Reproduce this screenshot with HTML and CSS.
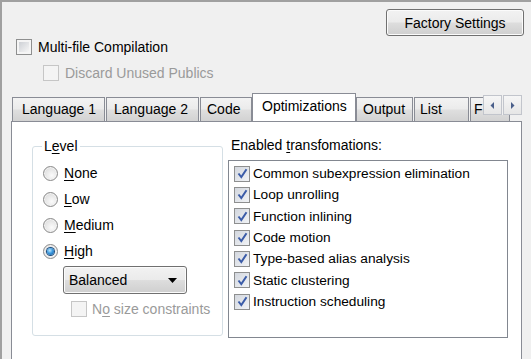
FILE: index.html
```html
<!DOCTYPE html>
<html>
<head>
<meta charset="utf-8">
<link rel="stylesheet" href="styles.css">
</head>
<body>
<div class="frame">
  <div class="top">
    <button class="btn factory">Factory Settings</button>
  </div>
  <div class="row multi">
    <span class="cb"></span><span class="lbl">Multi-file Compilation</span>
  </div>
  <div class="row discard disabled">
    <span class="cb off"></span><span class="lbl">Discard Unused Publics</span>
  </div>

  <div class="tabstrip">
    <div class="tab t-l1">Language 1</div>
    <div class="tab t-l2">Language 2</div>
    <div class="tab t-code">Code</div>
    <div class="tab sel t-opt">Optimizations</div>
    <div class="tab t-out">Output</div>
    <div class="tab t-list">List</div>
    <div class="tab t-f">F</div>
    <div class="scroller">
      <span class="sbtn"><svg width="5" height="7" viewBox="0 0 5 7"><path d="M4 0 L4 7 L0.5 3.5 Z" fill="#4a5f8a"/></svg></span>
      <span class="sbtn"><svg width="5" height="7" viewBox="0 0 5 7"><path d="M1 0 L1 7 L4.5 3.5 Z" fill="#4a5f8a"/></svg></span>
    </div>
  </div>

  <div class="panel">
    <fieldset class="group">
      <legend>L<u>e</u>vel</legend>
      <div class="radio-row"><span class="rb"></span><span class="lbl"><u>N</u>one</span></div>
      <div class="radio-row"><span class="rb"></span><span class="lbl"><u>L</u>ow</span></div>
      <div class="radio-row"><span class="rb"></span><span class="lbl"><u>M</u>edium</span></div>
      <div class="radio-row"><span class="rb on"><span class="dot"></span></span><span class="lbl"><u>H</u>igh</span></div>
      <div class="combo"><span class="ctext">Balanced</span><svg width="9" height="5" viewBox="0 0 9 5"><path d="M0 0 L9 0 L4.5 5 Z" fill="#000"/></svg></div>
      <div class="row nosize disabled"><span class="cb off"></span><span class="lbl">N<u>o</u> size constraints</span></div>
    </fieldset>

    <div class="right">
      <div class="caption">Enabled <u>t</u>ransfomations:</div>
      <div class="listbox">
        <div class="item"><span class="cb chk"><svg width="11" height="11" viewBox="0 0 11 11"><path d="M1.5 5.5 L4.3 9 L9.5 1.2" fill="none" stroke="#3b5ca8" stroke-width="2"/></svg></span><span>Common subexpression elimination</span></div>
        <div class="item"><span class="cb chk"><svg width="11" height="11" viewBox="0 0 11 11"><path d="M1.5 5.5 L4.3 9 L9.5 1.2" fill="none" stroke="#3b5ca8" stroke-width="2"/></svg></span><span>Loop unrolling</span></div>
        <div class="item"><span class="cb chk"><svg width="11" height="11" viewBox="0 0 11 11"><path d="M1.5 5.5 L4.3 9 L9.5 1.2" fill="none" stroke="#3b5ca8" stroke-width="2"/></svg></span><span>Function inlining</span></div>
        <div class="item"><span class="cb chk"><svg width="11" height="11" viewBox="0 0 11 11"><path d="M1.5 5.5 L4.3 9 L9.5 1.2" fill="none" stroke="#3b5ca8" stroke-width="2"/></svg></span><span>Code motion</span></div>
        <div class="item"><span class="cb chk"><svg width="11" height="11" viewBox="0 0 11 11"><path d="M1.5 5.5 L4.3 9 L9.5 1.2" fill="none" stroke="#3b5ca8" stroke-width="2"/></svg></span><span>Type-based alias analysis</span></div>
        <div class="item"><span class="cb chk"><svg width="11" height="11" viewBox="0 0 11 11"><path d="M1.5 5.5 L4.3 9 L9.5 1.2" fill="none" stroke="#3b5ca8" stroke-width="2"/></svg></span><span>Static clustering</span></div>
        <div class="item"><span class="cb chk"><svg width="11" height="11" viewBox="0 0 11 11"><path d="M1.5 5.5 L4.3 9 L9.5 1.2" fill="none" stroke="#3b5ca8" stroke-width="2"/></svg></span><span>Instruction scheduling</span></div>
      </div>
    </div>
  </div>
</div>
</body>
</html>
```
FILE: styles.css
```css
html, body {
  margin: 0;
  padding: 0;
}
body {
  background: #f0f0f0;
  font-family: "Liberation Sans", Arial, sans-serif;
  font-size: 14px;
  color: #000;
  width: 531px;
  height: 359px;
  overflow: hidden;
}
u {
  text-decoration: underline;
  text-underline-offset: 2px;
}
.frame {
  height: 359px;
  box-sizing: border-box;
  border-left: 2px solid #a0a0a0;
  border-top: 2px solid #a0a0a0;
  overflow: hidden;
}
.top {
  display: flex;
  justify-content: flex-end;
  padding: 7px 7px 0 0;
}
.btn {
  font: inherit;
  color: #000;
  border: 1px solid #707070;
  border-radius: 3px;
  background: linear-gradient(#f2f2f2 0%, #ebebeb 48%, #dddddd 52%, #cfcfcf 100%);
  box-shadow: inset 0 0 0 1px #fbfbfb;
  padding: 0;
}
.factory {
  width: 138px;
  height: 27px;
}
.row {
  display: flex;
  align-items: center;
  height: 17px;
}
.row .lbl {
  margin-left: 6px;
}
.multi {
  margin-top: 2px;
  padding-left: 14px;
}
.discard {
  margin-top: 9px;
  padding-left: 41px;
}
.disabled {
  color: #9a9a9a;
}
.cb {
  box-sizing: border-box;
  width: 16px;
  height: 16px;
  flex: none;
  border: 1px solid #8e8f8f;
  padding: 2px;
  background: linear-gradient(135deg, #cdd0d5, #f6f6f6) content-box, #f5f5f5;
  display: inline-flex;
  align-items: center;
  justify-content: center;
}
.cb.off {
  border-color: #c6c6c6;
  background: #f4f4f4;
}
.cb.chk {
  background: linear-gradient(135deg, #d3d7de, #f1f3f6) content-box, #f4f4f4;
  padding: 0;
}
.tabstrip {
  position: relative;
  z-index: 1;
  display: flex;
  align-items: flex-end;
  height: 28px;
  margin-top: 12px;
  margin-left: 10px;
  width: 510px;
  overflow: hidden;
}
.tab {
  box-sizing: border-box;
  height: 24px;
  flex: none;
  border: 1px solid #898c95;
  border-bottom: none;
  background: linear-gradient(#f3f3f3 0%, #ebebeb 48%, #dfdfdf 52%, #d2d2d2 100%);
  padding: 3px 0 0 7px;
  line-height: 17px;
  white-space: nowrap;
}
.tab + .tab {
  margin-left: 1px;
}
.t-l1 { width: 93px; padding-left: 9px; }
.t-l2 { width: 93px; }
.t-code { width: 52px; padding-left: 6px; }
.t-opt { width: 104px; }
.t-out { width: 57px; padding-left: 6px; }
.t-list { width: 55px; padding-left: 5px; }
.t-f { width: 40px; padding-left: 3px; }
.tab.sel {
  height: 29px;
  margin-bottom: -1px;
  background: #fff;
  padding-top: 4px;
  padding-left: 9px;
  margin-left: 0;
}
.tab.sel + .tab {
  margin-left: 0;
}
.scroller {
  position: absolute;
  right: 0;
  top: 2px;
  display: flex;
  gap: 1px;
  background: #f0f0f0;
}
.sbtn {
  box-sizing: border-box;
  width: 19px;
  height: 20px;
  border: 1px solid #c2c5cc;
  background: linear-gradient(#f6f6f6, #e6e6e6);
  display: flex;
  align-items: center;
  justify-content: center;
}
.panel {
  box-sizing: border-box;
  margin-left: 9px;
  width: 511px;
  height: 260px;
  background: #fff;
  border: 1px solid #898c95;
  display: flex;
  align-items: flex-start;
  padding: 15px 0 0 20px;
}
.group {
  margin: 1px 0 0 0;
  width: 191px;
  box-sizing: border-box;
  border: 1px solid #d5dfe5;
  border-radius: 3px;
  padding: 0 0 18px 10px;
  min-width: 0;
}
.group legend {
  margin-left: -1px;
  padding: 0 2px;
  line-height: 16px;
}
.radio-row {
  display: flex;
  align-items: center;
  height: 18px;
  margin-top: 8px;
}
.radio-row:first-of-type {
  margin-top: 10px;
}
.radio-row .lbl {
  margin-left: 6px;
}
.rb {
  box-sizing: border-box;
  width: 15px;
  height: 15px;
  border-radius: 50%;
  border: 1px solid #8a8a8a;
  background: radial-gradient(circle at 60% 65%, #fbfbfb 0%, #e6e6e6 55%, #cfcfcf 100%);
  box-shadow: inset 0 0 0 1px #f3f3f3;
  display: flex;
  align-items: center;
  justify-content: center;
}
.rb .dot {
  width: 7px;
  height: 7px;
  border-radius: 50%;
  background: radial-gradient(circle at 40% 35%, #bfe6fb 0%, #3d9be0 45%, #0f4f93 100%);
  box-shadow: 0 0 0 1px #1d4d7f;
}
.combo {
  box-sizing: border-box;
  width: 124px;
  height: 28px;
  margin: 6px 0 0 20px;
  border: 1px solid #707070;
  border-radius: 3px;
  background: linear-gradient(#f2f2f2 0%, #ebebeb 48%, #dddddd 52%, #cfcfcf 100%);
  box-shadow: inset 0 0 0 1px #fbfbfb;
  display: flex;
  align-items: center;
  justify-content: space-between;
  padding: 0 9px 0 5px;
}
.nosize {
  margin: 6px 0 0 28px;
}
.nosize .lbl {
  margin-left: 5px;
}
.right {
  margin-left: 5px;
}
.caption {
  margin-left: 3px;
  line-height: 16px;
}
.listbox {
  box-sizing: border-box;
  margin-top: 7px;
  width: 280px;
  height: 178px;
  border: 1px solid #828790;
  background: #fff;
  padding: 2px 0 0 5px;
  font-size: 13.7px;
}
.item {
  display: flex;
  align-items: center;
  height: 21.33px;
}
.item .cb {
  margin-right: 3px;
}
```
